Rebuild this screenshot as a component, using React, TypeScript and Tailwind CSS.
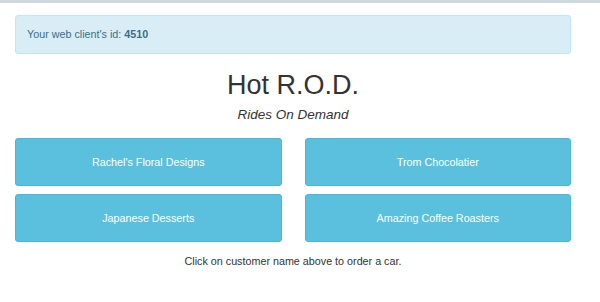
const customers = [
  "Rachel's Floral Designs",
  "Trom Chocolatier",
  "Japanese Desserts",
  "Amazing Coffee Roasters",
]

export default function App() {
  return (
    <div className="w-[600px] h-[302px] bg-white font-['Liberation_Sans',Arial,sans-serif] text-[#333]">
      <div className="h-[3px] bg-[#cdd8e1]" />
      <div className="pl-[15px] w-[571px] pt-[12px]">
        <div className="h-[39px] px-[11px] flex items-center bg-[#d9edf7] border border-[#bce8f1] rounded-[3px] text-[10.75px] leading-[15px] text-[#3a6f8c]">
          <span>
            Your web client's id: <strong className="font-bold">4510</strong>
          </span>
        </div>

        <h1 className="mt-[16px] text-center text-[27px] leading-[30px]">Hot R.O.D.</h1>
        <h4 className="mt-[7px] text-center text-[13.5px] leading-[15px] italic">Rides On Demand</h4>

        <div className="mt-[16px] grid grid-cols-2 gap-x-[23px] gap-y-[8px]">
          {customers.map((name) => (
            <button
              key={name}
              className="h-[48px] bg-[#5bc0de] border border-[#46b8da] rounded-[3px] text-white text-[10.75px] leading-[15px] text-center"
            >
              {name}
            </button>
          ))}
        </div>

        <p className="mt-[12px] text-center text-[10.75px] leading-[15px]">
          Click on customer name above to order a car.
        </p>
      </div>
    </div>
  )
}
